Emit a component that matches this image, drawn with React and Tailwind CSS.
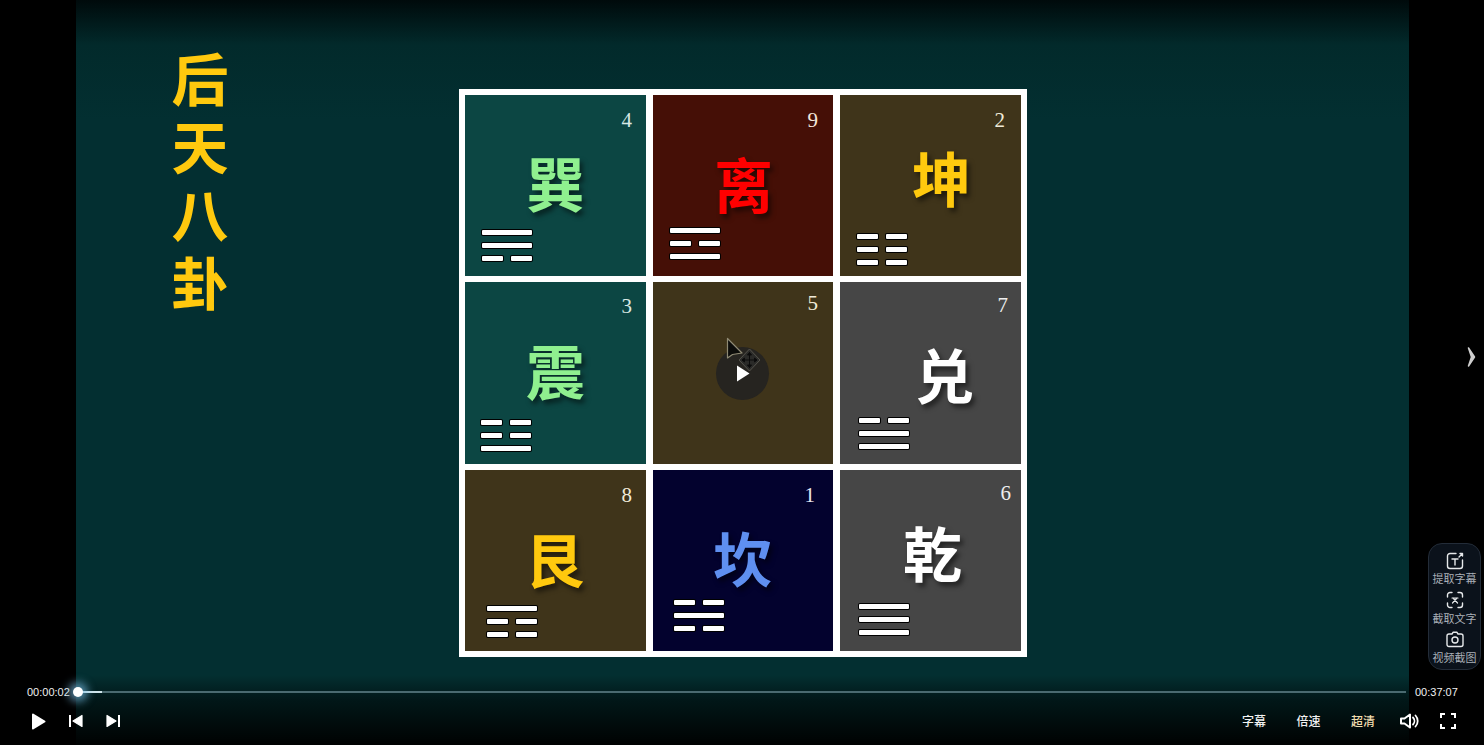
const CJK = "font-['Noto_Sans_CJK_SC',sans-serif]";

function Trigram({ lines }) {
  return (
    <div className="ml-px flex w-[50px] flex-col gap-[8px] pt-[1px]">
      {lines.map((solid, i) =>
        solid ? (
          <div key={i} className="h-[5px] w-full rounded-[1px] bg-white shadow-[0_0_0_1px_#000]" />
        ) : (
          <div key={i} className="flex h-[5px] w-full justify-between">
            <div className="h-[5px] w-[21px] rounded-[1px] bg-white shadow-[0_0_0_1px_#000]" />
            <div className="h-[5px] w-[21px] rounded-[1px] bg-white shadow-[0_0_0_1px_#000]" />
          </div>
        )
      )}
    </div>
  );
}

const cells = [
  { n: "4", c: "巽", lines: [1, 1, 0], bg: "bg-[#0c4643]", color: "text-[#8ff08f]", numC: "mt-[13px] mr-[14px] text-[#d8e8e4]", chC: "mt-[20px] ml-[61px]", trC: "mt-[17px] ml-[16px]" },
  { n: "9", c: "离", lines: [1, 0, 1], bg: "bg-[#450f06]", color: "text-[#ff0000]", numC: "mt-[13px] mr-[15px] text-[#f4e6dc]", chC: "mt-[21px] ml-[61px]", trC: "mt-[14px] ml-[16px]" },
  { n: "2", c: "坤", lines: [0, 0, 0], bg: "bg-[#3f341a]", color: "text-[#ffc90e]", numC: "mt-[13px] mr-[16px] text-[#f0ead8]", chC: "mt-[15px] ml-[72px]", trC: "mt-[26px] ml-[16px]" },
  { n: "3", c: "震", lines: [0, 0, 1], bg: "bg-[#0c4643]", color: "text-[#8ff08f]", numC: "mt-[12px] mr-[14px] text-[#d8e8e4]", chC: "mt-[22px] ml-[61px]", trC: "mt-[19px] ml-[15px]" },
  { n: "5", bg: "bg-[#3f341a]", numC: "mt-[9px] mr-[15px] text-[#f0ead8]" },
  { n: "7", c: "兑", lines: [0, 1, 1], bg: "bg-[#464646]", color: "text-white", numC: "mt-[11px] mr-[13px] text-[#eeeeee]", chC: "mt-[27px] ml-[75px]", trC: "mt-[13px] ml-[18px]" },
  { n: "8", c: "艮", lines: [1, 0, 0], bg: "bg-[#3f341a]", color: "text-[#ffc90e]", numC: "mt-[13px] mr-[14px] text-[#f0ead8]", chC: "mt-[21px] ml-[60px]", trC: "mt-[17px] ml-[21px]" },
  { n: "1", c: "坎", lines: [0, 1, 0], bg: "bg-[#03022e]", color: "text-[#5f8ff0]", numC: "mt-[13px] mr-[18px] text-[#e8e8f0]", chC: "mt-[20px] ml-[60px]", trC: "mt-[12px] ml-[20px]" },
  { n: "6", c: "乾", lines: [1, 1, 1], bg: "bg-[#464646]", color: "text-white", numC: "mt-[11px] mr-[10px] text-[#eeeeee]", chC: "mt-[17px] ml-[63px]", trC: "mt-[21px] ml-[18px]" },
];

function Cell({ d }) {
  return (
    <div className={`flex h-full w-full flex-col ${d.bg}`}>
      <div className={`h-6 self-end font-['Liberation_Serif',serif] text-[21px] leading-6 ${d.numC}`}>{d.n}</div>
      {d.c && (
        <div className={`h-[60px] w-[60px] self-start ${CJK} text-[59px] leading-[60px] font-bold [text-shadow:3px_4px_5px_rgba(0,0,0,0.5)] ${d.chC} ${d.color}`}>
          {d.c}
        </div>
      )}
      {d.lines && (
        <div className={`self-start ${d.trC}`}>
          <Trigram lines={d.lines} />
        </div>
      )}
    </div>
  );
}

function ToolItem({ label, children }) {
  return (
    <div className="flex flex-col items-center">
      <div className="flex h-[19px] items-center justify-center">{children}</div>
      <div className={`h-[16px] whitespace-nowrap ${CJK} text-[11px] leading-[16px] text-[#aab0b8]`}>{label}</div>
    </div>
  );
}

export default function App() {
  return (
    <div className="relative flex h-[745px] w-[1484px] overflow-hidden bg-black">
      <div className="w-[76px] shrink-0" />
      <div className="flex h-full w-[1333px] shrink-0 bg-[linear-gradient(180deg,#000a0b_0px,#022a2b_45px,#032f31_120px,#032f31_100%)]">
        <div className={`ml-[92px] mt-[42px] flex h-fit w-[64px] flex-col items-center ${CJK} text-[57px] leading-[68px] font-bold text-[#ffc90e]`}>
          <span>后</span>
          <span>天</span>
          <span>八</span>
          <span>卦</span>
        </div>
        <div className="ml-[227px] mt-[89px] grid h-[568px] w-[568px] grid-cols-[181px_180px_181px] grid-rows-[181px_182px_181px] gap-x-[7px] gap-y-[6px] bg-white p-[6px]">
          {cells.map((d) => (
            <Cell key={d.n} d={d} />
          ))}
        </div>
      </div>

      {/* Centre play button and cursor */}
      <div className="absolute left-[716px] top-[347px] flex h-[53px] w-[53px] items-center justify-center rounded-full bg-[#262420]">
        <svg width="14" height="17" viewBox="0 0 14 17"><path d="M1 0.5 L13.5 8.5 L1 16.5 Z" fill="#fff" /></svg>
      </div>
      <svg className="absolute left-[724px] top-[336px]" width="40" height="38" viewBox="0 0 40 38">
        <path d="M3.5 2.5 L3.5 22 L8.5 18.5 L18 17 Z" fill="#0c0c0a" stroke="#8f8a74" strokeWidth="1.2" strokeLinejoin="round" />
        <path d="M25.5 13 L36 24 L25.5 35 L15 24 Z" fill="#2a2a28" stroke="#55534c" strokeWidth="1" />
        <path d="M25.5 16.5 V31.5 M18 24 H33 M25.5 16.5 l-2 2.5 h4 Z M25.5 31.5 l-2 -2.5 h4 Z M18 24 l2.5 -2 v4 Z M33 24 l-2.5 -2 v4 Z" fill="#0b0b0b" stroke="#0b0b0b" strokeWidth="1" />
      </svg>

      {/* Right side chevron */}
      <svg className="absolute left-[1466px] top-[346px]" width="11" height="22" viewBox="0 0 11 22" fill="none">
        <path d="M2.5 2 L8.5 11 L2.5 20 L5.5 11 Z" fill="#cfcfcf" stroke="#cfcfcf" strokeWidth="1.5" strokeLinejoin="round" />
      </svg>

      {/* Floating tools */}
      <div className="absolute left-[1428px] top-[543px] flex h-[127px] w-[53px] flex-col items-center gap-[4.5px] rounded-[14px] border border-[#232c38] bg-[#0b121b] pt-[7px]">
        <ToolItem label="提取字幕">
          <svg width="18" height="18" viewBox="0 0 18 18" fill="none" stroke="#e6e8ea" strokeWidth="1.4" strokeLinecap="round" strokeLinejoin="round">
            <path d="M10 1.5 H4 a2.5 2.5 0 0 0 -2.5 2.5 V14 a2.5 2.5 0 0 0 2.5 2.5 H14 a2.5 2.5 0 0 0 2.5 -2.5 V8" />
            <path d="M6 7 H12 M9 7 V13" />
            <path d="M13 5 L16.5 1.5 M14 1.5 H16.5 V4" />
          </svg>
        </ToolItem>
        <ToolItem label="截取文字">
          <svg width="18" height="18" viewBox="0 0 18 18" fill="none" stroke="#e6e8ea" strokeWidth="1.4" strokeLinecap="round" strokeLinejoin="round">
            <path d="M6 1.5 H4 a2.5 2.5 0 0 0 -2.5 2.5 V6 M12 1.5 H14 a2.5 2.5 0 0 1 2.5 2.5 V6 M6 16.5 H4 a2.5 2.5 0 0 1 -2.5 -2.5 V12 M12 16.5 H14 a2.5 2.5 0 0 0 2.5 -2.5 V12" />
            <path d="M6 7 H12 M7 7 L11.5 12 M11 7 L6.5 12" strokeWidth="1.2" />
          </svg>
        </ToolItem>
        <ToolItem label="视频截图">
          <svg width="18" height="17" viewBox="0 0 18 17" fill="none" stroke="#e6e8ea" strokeWidth="1.4" strokeLinejoin="round">
            <path d="M6 3 L7.2 1.2 H10.8 L12 3 H15 a2 2 0 0 1 2 2 V13.5 a2 2 0 0 1 -2 2 H3 a2 2 0 0 1 -2 -2 V5 a2 2 0 0 1 2 -2 Z" />
            <circle cx="9" cy="9" r="3" />
          </svg>
        </ToolItem>
      </div>

      {/* Bottom control bar */}
      <div className="absolute inset-x-0 bottom-0 flex h-[70px] flex-col bg-[linear-gradient(180deg,rgba(0,0,0,0)_0%,rgba(0,0,0,0.5)_35%,rgba(0,0,0,0.97)_100%)]">
        <div className="mt-[9px] flex h-4 items-center font-['Liberation_Sans',sans-serif] text-[11px] text-[#f0f0f0]">
          <span className="ml-[27px] w-[43px]">00:00:02</span>
          <div className="relative ml-[8px] h-[2px] w-[1328px] bg-[#4a6a70]">
            <div className="h-full w-[24px] bg-[#cfe4ea]" />
            <div className="absolute -top-[4px] -left-[5px] h-[10px] w-[10px] rounded-full bg-white shadow-[0_0_9px_5px_rgba(120,190,230,0.65)]" />
          </div>
          <span className="ml-[9px]">00:37:07</span>
        </div>
        <div className="mt-[9px] flex h-6 items-center">
          <svg className="ml-[31px]" width="15" height="17" viewBox="0 0 15 17"><path d="M2 1.5 L13.5 8.5 L2 15.5 Z" fill="#fff" stroke="#fff" strokeWidth="2" strokeLinejoin="round" /></svg>
          <svg className="ml-[22px]" width="15" height="14" viewBox="0 0 15 14"><path d="M1 1 H3 V13 H1 Z" fill="#fff" /><path d="M14 1.5 V12.5 L5 7 Z" fill="#fff" stroke="#fff" strokeWidth="1.2" strokeLinejoin="round" /></svg>
          <svg className="ml-[23px]" width="15" height="14" viewBox="0 0 15 14"><path d="M12 1 H14 V13 H12 Z" fill="#fff" /><path d="M1 1.5 V12.5 L10 7 Z" fill="#fff" stroke="#fff" strokeWidth="1.2" strokeLinejoin="round" /></svg>
          <div className={`ml-[1121px] flex w-[133px] justify-between ${CJK} text-xs font-medium text-[#f2f2f2]`}>
            <span>字幕</span>
            <span>倍速</span>
            <span className="text-[#f3deb0]">超清</span>
          </div>
          <svg className="ml-[25px]" width="19" height="16" viewBox="0 0 19 16" fill="none"><path d="M1 5.5 H4.5 L10 1.5 V14.5 L4.5 10.5 H1 Z" stroke="#fff" strokeWidth="2" strokeLinejoin="round" /><path d="M13 4.5 a5 5 0 0 1 0 7 M15.5 2.5 a8 8 0 0 1 0 11" stroke="#fff" strokeWidth="1.8" strokeLinecap="round" /></svg>
          <svg className="ml-[21px]" width="16" height="16" viewBox="0 0 16 16" fill="none" stroke="#fff" strokeWidth="2"><path d="M1 5 V1 H5 M11 1 H15 V5 M15 11 V15 H11 M5 15 H1 V11" /></svg>
        </div>
      </div>
    </div>
  );
}
